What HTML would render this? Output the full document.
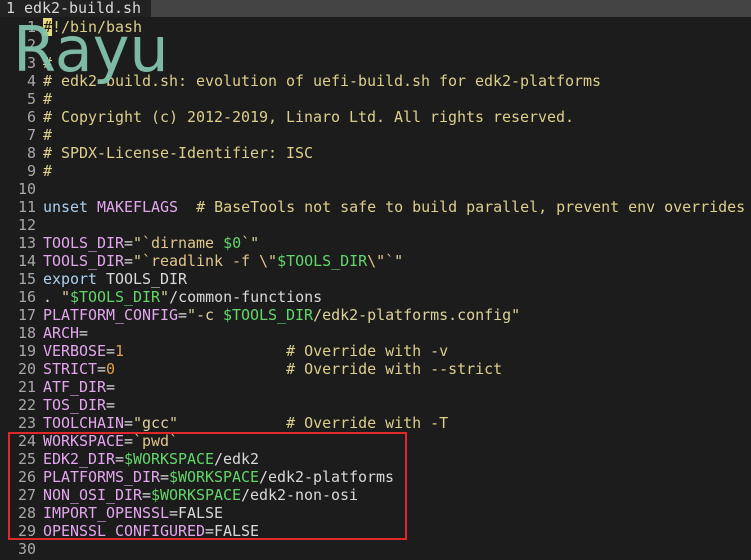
<!DOCTYPE html>
<html><head><meta charset="utf-8"><style>
html,body{margin:0;padding:0;width:751px;height:560px;overflow:hidden;background:#1c1c1c}
.bar{position:absolute;left:0;top:0;width:751px;height:17px;background:#444444}
.tab{position:absolute;left:0;top:0;width:151px;height:17px;background:#222222;color:#d8d8d8;font:15px/17px "DejaVu Sans Mono",monospace;padding-left:6px;box-sizing:border-box;letter-spacing:-0.03px}
.code{position:absolute;left:0;top:18px;font:15px/18px "DejaVu Sans Mono","Liberation Mono",monospace;color:#d8d8d8;white-space:pre;letter-spacing:-0.03px}
.ln{display:inline-block;width:36px;text-align:right;color:#a8a8a8;margin-right:7px}
.c{color:#dccf8a}.v{color:#e3a6ee}.k{color:#a9d1f2}.s{color:#dcd29a}.g{color:#62d66a}.n{color:#e0a050}.b{color:#e0c58a}
.cur{background:#e8dc7a;color:#1c1c1c}
.wm{position:absolute;left:13px;top:10px;font:62px/80px "DejaVu Sans","Liberation Sans",sans-serif;color:#82c3ad;opacity:0.95}
.box{position:absolute;left:8px;top:432px;width:395px;height:104px;border:2px solid #e02828}
</style></head><body>
<div class="bar"></div><div class="tab">1 edk2-build.sh</div>
<div class="code"><span class="ln">1</span><span class="cur">#</span><span class="c">!/bin/bash</span>
<span class="ln">2</span>
<span class="ln">3</span><span class="c">#</span>
<span class="ln">4</span><span class="c"># edk2-build.sh: evolution of uefi-build.sh for edk2-platforms</span>
<span class="ln">5</span><span class="c">#</span>
<span class="ln">6</span><span class="c"># Copyright (c) 2012-2019, Linaro Ltd. All rights reserved.</span>
<span class="ln">7</span><span class="c">#</span>
<span class="ln">8</span><span class="c"># SPDX-License-Identifier: ISC</span>
<span class="ln">9</span><span class="c">#</span>
<span class="ln">10</span>
<span class="ln">11</span><span class="k">unset</span> <span class="v">MAKEFLAGS</span>  <span class="c"># BaseTools not safe to build parallel, prevent env overrides</span>
<span class="ln">12</span>
<span class="ln">13</span><span class="v">TOOLS_DIR</span>=<span class="s">"</span><span class="b">`dirname </span><span class="g">$0</span><span class="b">`</span><span class="s">"</span>
<span class="ln">14</span><span class="v">TOOLS_DIR</span>=<span class="s">"</span><span class="b">`readlink -f \"</span><span class="g">$TOOLS_DIR</span><span class="b">\"`</span><span class="s">"</span>
<span class="ln">15</span><span class="k">export</span> TOOLS_DIR
<span class="ln">16</span>. <span class="s">"</span><span class="g">$TOOLS_DIR</span><span class="s">"</span>/common-functions
<span class="ln">17</span><span class="v">PLATFORM_CONFIG</span>=<span class="s">"-c </span><span class="g">$TOOLS_DIR</span><span class="s">/edk2-platforms.config"</span>
<span class="ln">18</span><span class="v">ARCH</span>=
<span class="ln">19</span><span class="v">VERBOSE</span>=<span class="n">1</span>                  <span class="c"># Override with -v</span>
<span class="ln">20</span><span class="v">STRICT</span>=<span class="n">0</span>                   <span class="c"># Override with --strict</span>
<span class="ln">21</span><span class="v">ATF_DIR</span>=
<span class="ln">22</span><span class="v">TOS_DIR</span>=
<span class="ln">23</span><span class="v">TOOLCHAIN</span>=<span class="s">"gcc"</span>            <span class="c"># Override with -T</span>
<span class="ln">24</span><span class="v">WORKSPACE</span>=<span class="b">`pwd`</span>
<span class="ln">25</span><span class="v">EDK2_DIR</span>=<span class="g">$WORKSPACE</span>/edk2
<span class="ln">26</span><span class="v">PLATFORMS_DIR</span>=<span class="g">$WORKSPACE</span>/edk2-platforms
<span class="ln">27</span><span class="v">NON_OSI_DIR</span>=<span class="g">$WORKSPACE</span>/edk2-non-osi
<span class="ln">28</span><span class="v">IMPORT_OPENSSL</span>=FALSE
<span class="ln">29</span><span class="v">OPENSSL_CONFIGURED</span>=FALSE
<span class="ln">30</span></div>
<div class="wm">Rayu</div>
<div class="box"></div>
</body></html>
